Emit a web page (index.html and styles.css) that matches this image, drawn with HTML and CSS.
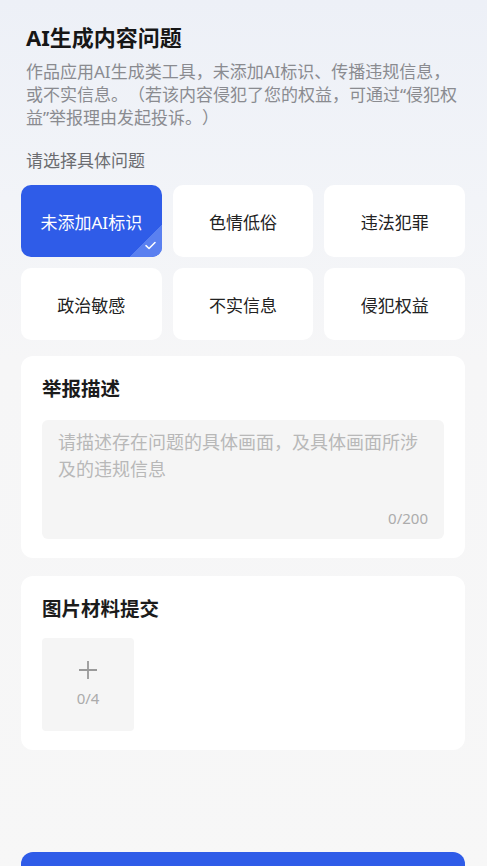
FILE: index.html
```html
<!DOCTYPE html>
<html lang="zh-CN">
<head>
<meta charset="utf-8">
<link rel="stylesheet" href="styles.css">
</head>
<body>
<div class="page">
  <div class="intro">
    <h1 class="title">AI生成内容问题</h1>
    <p class="desc">作品应用AI生成类工具，未添加AI标识、传播违规信息，或不实信息。（若该内容侵犯了您的权益，可通过“侵犯权益”举报理由发起投诉。）</p>
    <div class="label">请选择具体问题</div>
  </div>
  <div class="chips">
    <div class="chip selected">未添加AI标识
      <span class="corner"><svg class="check" viewBox="0 0 12 10" width="11" height="9"><path d="M1 5.2 L4.4 8.3 L11 1.6" fill="none" stroke="#fff" stroke-width="1.7" stroke-linecap="round" stroke-linejoin="round"/></svg></span>
    </div>
    <div class="chip">色情低俗</div>
    <div class="chip">违法犯罪</div>
    <div class="chip">政治敏感</div>
    <div class="chip">不实信息</div>
    <div class="chip">侵犯权益</div>
  </div>
  <div class="card">
    <div class="card-title">举报描述</div>
    <div class="textarea">
      <div class="placeholder">请描述存在问题的具体画面，及具体画面所涉及的违规信息</div>
      <div class="count">0/200</div>
    </div>
  </div>
  <div class="card card-upload">
    <div class="card-title">图片材料提交</div>
    <div class="upload">
      <svg viewBox="0 0 20 20" width="20" height="20"><path d="M10 1 V19 M1 10 H19" stroke="#9a9a9a" stroke-width="1.8" fill="none"/></svg>
      <div class="upload-count">0/4</div>
    </div>
  </div>
  <div class="submit"></div>
</div>
</body>
</html>
```

FILE: styles.css
```css
html, body {
  margin: 0;
  padding: 0;
}
body {
  font-family: "Noto Sans", "Noto Sans CJK SC", sans-serif;
  text-spacing-trim: space-all;
  background: linear-gradient(180deg, #edf0f7 0px, #f2f4f8 200px, #f6f6f7 360px, #f7f7f7 100%);
  min-height: 866px;
  overflow: hidden;
}
.page {
  padding: 0 22px 0 21px;
  display: flex;
  flex-direction: column;
}
.intro {
  padding: 0 0 0 5px;
}
.title {
  margin: 22px 0 0;
  font-size: 22px;
  line-height: 30px;
  font-weight: 700;
  color: #161616;
}
.desc {
  margin: 8px 0 0;
  font-size: 17px;
  line-height: 23px;
  color: #8a8b90;
}
.label {
  margin-top: 21px;
  font-size: 17px;
  line-height: 22px;
  color: #6b6c70;
}
.chips {
  margin-top: 13px;
  display: grid;
  grid-template-columns: repeat(3, 1fr);
  grid-auto-rows: 72px;
  gap: 11px 11px;
}
.chip {
  position: relative;
  overflow: hidden;
  background: #fff;
  border-radius: 10px;
  display: flex;
  align-items: center;
  justify-content: center;
  font-size: 17px;
  color: #222;
}
.chip.selected {
  background: #2f5ce8;
  color: #fff;
}
.corner {
  position: absolute;
  right: 0;
  bottom: 0;
  width: 32px;
  height: 32px;
  background: linear-gradient(135deg, transparent 50%, #5a80f0 50%);
}
.check {
  position: absolute;
  right: 6px;
  bottom: 7px;
}
.card {
  margin-top: 16px;
  background: #fff;
  border-radius: 12px;
  padding: 21px 21px 19px;
}
.card-upload {
  margin-top: 18px;
}
.card-title {
  font-size: 19.5px;
  line-height: 24px;
  font-weight: 700;
  color: #1b1b1b;
}
.textarea {
  margin-top: 19px;
  height: 119px;
  box-sizing: border-box;
  background: #f5f5f5;
  border-radius: 6px;
  padding: 9px 16px 0;
  display: flex;
  flex-direction: column;
}
.placeholder {
  font-size: 18px;
  line-height: 27px;
  color: #b8b8b8;
  flex: 1;
}
.count {
  align-self: flex-end;
  font-size: 15px;
  line-height: 20px;
  color: #acacac;
  margin-bottom: 11px;
}
.upload {
  margin-top: 17px;
  width: 92px;
  height: 93px;
  background: #f5f5f5;
  border-radius: 4px;
  display: flex;
  flex-direction: column;
  align-items: center;
  padding-top: 22px;
  box-sizing: border-box;
}
.upload-count {
  margin-top: 8px;
  font-size: 15px;
  line-height: 20px;
  color: #ababab;
}
.submit {
  margin-top: 102px;
  height: 50px;
  background: #2f5ce8;
  border-radius: 12px;
}
```
